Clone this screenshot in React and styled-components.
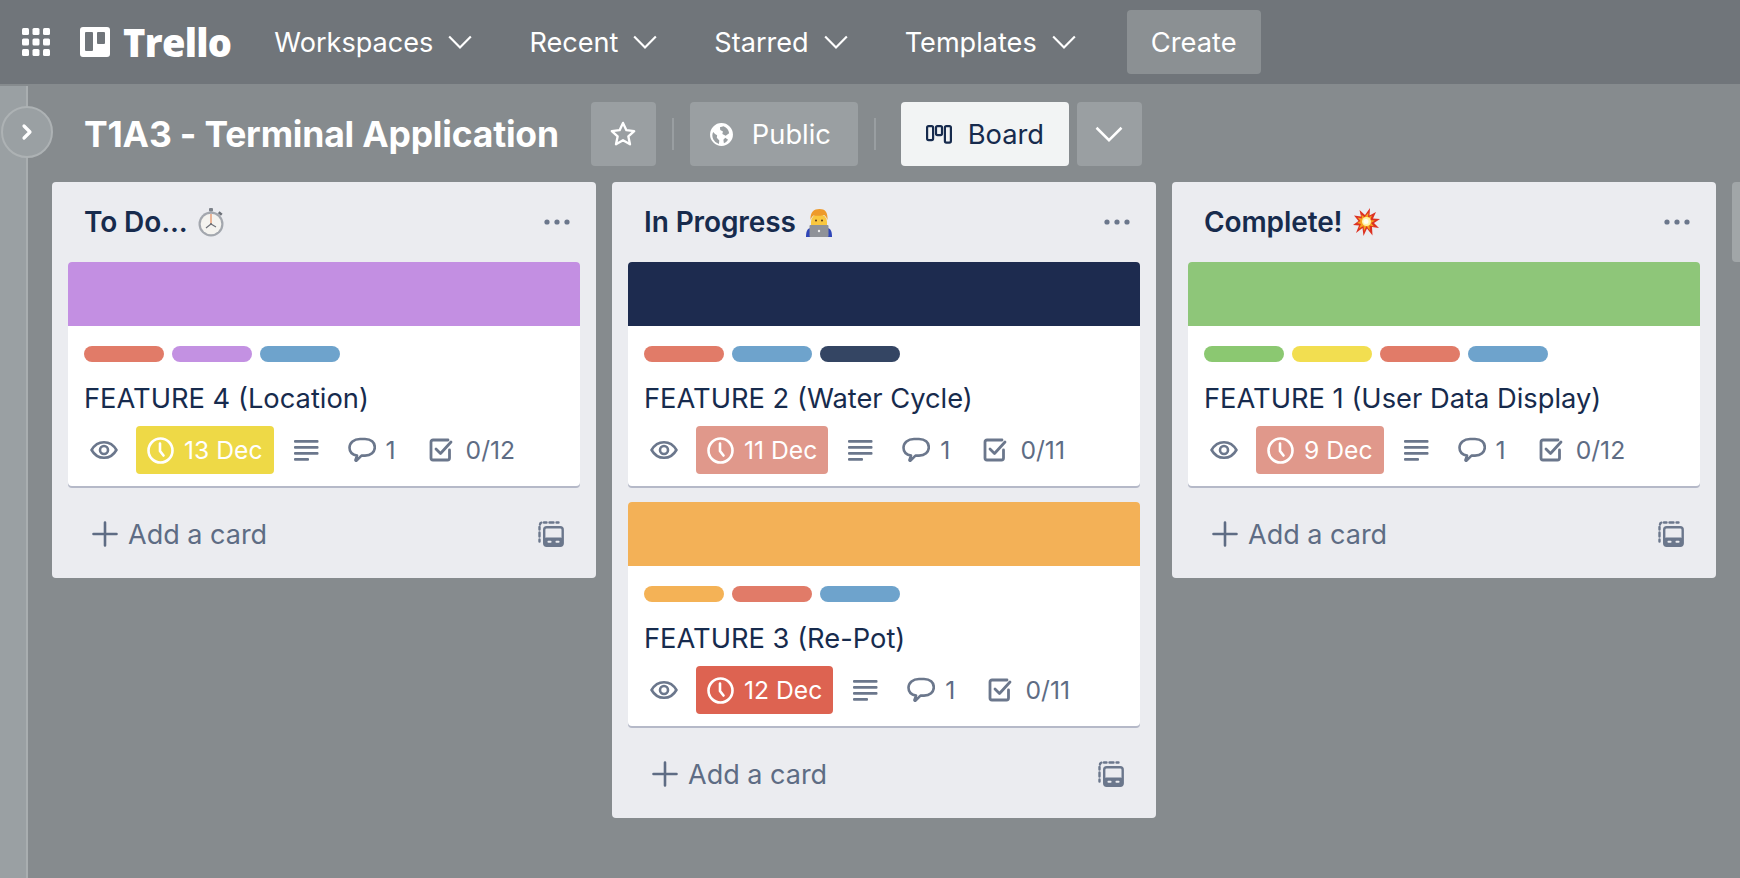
import styled, { createGlobalStyle } from "styled-components";

const Global = createGlobalStyle`
  html, body { margin: 0; padding: 0; height: 100%; }
  body { font-family: Inter, "Liberation Sans", sans-serif; overflow: hidden; background: #868b8e; }
  * { box-sizing: border-box; }
`;

const Page = styled.div`
  width: 1740px;
  height: 878px;
  display: flex;
  flex-direction: column;
  overflow: hidden;
`;

const TopBar = styled.header`
  height: 84px;
  flex: none;
  background: #70757a;
  display: flex;
  align-items: center;
  padding-left: 22px;
  color: #fff;
`;
const Logo = styled.div`
  display: flex;
  align-items: center;
  gap: 13px;
  margin-left: 30px;
  margin-right: 43px;
`;
const LogoText = styled.span`
  font-family: "Open Sans", sans-serif;
  font-size: 38px;
  font-weight: 800;
  letter-spacing: -0.7px;
  line-height: 1;
`;
const NavItem = styled.div`
  display: flex;
  align-items: center;
  gap: 14px;
  font-size: 27.1px;
  margin-right: ${(p) => (p.$last ? 50 : 56)}px;
`;
const CreateButton = styled.div`
  width: 134px;
  height: 64px;
  border-radius: 4px;
  background: #8b9093;
  display: flex;
  align-items: center;
  justify-content: center;
  font-size: 27.3px;
`;

const Body = styled.div`
  flex: 1;
  display: flex;
  position: relative;
`;
const Sidebar = styled.div`
  width: 28px;
  margin-top: 2px;
  flex: none;
  background: #9aa0a3;
  border-right: 2px solid #a9aeb0;
`;
const SidebarToggle = styled.div`
  position: absolute;
  left: 1px;
  top: 22px;
  width: 52px;
  height: 52px;
  border-radius: 50%;
  background: #9aa0a3;
  border: 2px solid #adb2b4;
  display: flex;
  align-items: center;
  justify-content: center;
`;
const Main = styled.main`
  flex: 1;
  min-width: 0;
  padding-top: 18px;
`;
const BoardBar = styled.div`
  height: 64px;
  display: flex;
  align-items: center;
  padding-left: 56px;
  color: #fff;
`;
const BoardTitle = styled.h1`
  margin: 0 32px 0 0;
  padding-top: 2px;
  font-size: 35.5px;
  font-weight: 700;
  line-height: 1;
  letter-spacing: -0.2px;
`;
const BarButton = styled.div`
  height: 64px;
  width: ${(p) => p.$width}px;
  margin-left: ${(p) => p.$offset || 0}px;
  border-radius: 4px;
  background: ${(p) => (p.$light ? "#f2f4f4" : "#9a9fa2")};
  color: ${(p) => (p.$light ? "#172b4d" : "#fff")};
  display: flex;
  align-items: center;
  justify-content: center;
  gap: 16px;
  font-size: 27.3px;
  flex: none;
`;
const PublicButton = styled(BarButton)`
  justify-content: flex-start;
  padding-left: 19px;
  gap: 18px;
`;
const BarDivider = styled.div`
  width: 2px;
  height: 32px;
  margin: 0 ${(p) => p.$after || 16}px 0 16px;
  background: #999ea1;
  flex: none;
`;

const Lists = styled.div`
  display: flex;
  align-items: flex-start;
  gap: 16px;
  margin: 16px 0 0 24px;
`;
const List = styled.section`
  width: 544px;
  flex: none;
  background: #ebecf0;
  border-radius: 4px;
  padding: 0 16px;
`;
const NextList = styled.div`
  width: 40px;
  height: 80px;
  flex: none;
  background: #a1a6a8;
  border-radius: 4px;
`;
const ListHeader = styled.div`
  height: 80px;
  display: flex;
  align-items: center;
  justify-content: space-between;
  padding: 0 10px 0 16px;
`;
const ListTitle = styled.h2`
  margin: 0;
  display: flex;
  align-items: center;
  gap: 10px;
  font-size: 28px;
  font-weight: 600;
  color: #172b4d;
  letter-spacing: -0.1px;
`;
const Cards = styled.div`
  display: flex;
  flex-direction: column;
  gap: 16px;
`;
const Card = styled.article`
  background: #fff;
  border-radius: 4px;
  box-shadow: 0 2px 0 #b5b9c8;
  overflow: hidden;
`;
const Cover = styled.div`
  height: 64px;
  background: ${(p) => p.$color};
`;
const CardBody = styled.div`
  padding: 20px 16px 12px;
`;
const Labels = styled.div`
  display: flex;
  gap: 8px;
`;
const Label = styled.span`
  width: 80px;
  height: 16px;
  border-radius: 8px;
  background: ${(p) => p.$color};
`;
const CardTitle = styled.div`
  margin-top: 21px;
  height: 32px;
  font-size: 27.3px;
  line-height: 32px;
  color: #172b4d;
  white-space: nowrap;
`;
const Meta = styled.div`
  margin-top: 11px;
  height: 48px;
  display: flex;
  align-items: center;
  padding-left: 6px;
  font-size: 24.7px;
  color: #5e6c84;
`;
const DueBadge = styled.div`
  height: 48px;
  margin: 0 20px 0 18px;
  padding: 0 11px;
  display: flex;
  align-items: center;
  gap: 10px;
  border-radius: 4px;
  background: ${(p) => p.$color};
  color: #fff;
`;
const Stat = styled.div`
  display: flex;
  align-items: center;
  gap: ${(p) => p.$inner}px;
  margin-left: ${(p) => p.$gap}px;
`;
const AddRow = styled.div`
  height: 92px;
  display: flex;
  align-items: center;
  justify-content: space-between;
  padding: 4px 16px 0 24px;
  color: #5e6c84;
  font-size: 27px;
`;
const AddLabel = styled.div`
  display: flex;
  align-items: center;
  gap: 10px;
`;

const Chevron = ({ size = 26, width = 2 }) => (
  <svg width={size} height={size} viewBox="0 0 24 24" fill="none" stroke="currentColor" strokeWidth={width}>
    <path d="M2 7l10 10L22 7" />
  </svg>
);

const GridIcon = () => (
  <svg width="28" height="28" viewBox="0 0 28 28" fill="#fff">
    {[0, 10.5, 21].map((y) =>
      [0, 10.5, 21].map((x) => <rect key={`${x}${y}`} x={x} y={y} width="7" height="7" rx="1.5" />)
    )}
  </svg>
);

const TrelloMark = () => (
  <svg width="30" height="30" viewBox="0 0 30 30">
    <path
      fill="#fff"
      fillRule="evenodd"
      d="M3 0h24a3 3 0 0 1 3 3v24a3 3 0 0 1-3 3H3a3 3 0 0 1-3-3V3a3 3 0 0 1 3-3zM6 5a1 1 0 0 0-1 1v17a1 1 0 0 0 1 1h6a1 1 0 0 0 1-1V6a1 1 0 0 0-1-1zM18 5a1 1 0 0 0-1 1v10a1 1 0 0 0 1 1h6a1 1 0 0 0 1-1V6a1 1 0 0 0-1-1z"
    />
  </svg>
);

const StarIcon = () => (
  <svg width="28" height="28" viewBox="0 0 24 24" fill="none" stroke="#fff" strokeWidth="2" strokeLinejoin="round">
    <path d="M12 2.500l2.900 6.200 6.700.8-5 4.600 1.400 6.700-6-3.400-6 3.400 1.400-6.700-5-4.600 6.700-.8z" />
  </svg>
);

const GlobeIcon = () => (
  <svg width="25" height="25" viewBox="0 0 24 24">
    <path
      fill="#fff"
      fillRule="evenodd"
      d="M12 1a11 11 0 1 1 0 22 11 11 0 0 1 0-22zM4 9.500a8.400 8.400 0 0 0 5.500 11.600l.4-3.300-2.400-2.600.3-2.400-2-1.300zM14 4l-3.500 1 .3 2.700 2.600 1.300-.6 2.500 3.200 1.600 3.300-2.200A8.400 8.400 0 0 0 14 4zm1.600 11.200l-1.800 1.800.5 3.500a8.400 8.400 0 0 0 4-3.400z"
    />
  </svg>
);

const BoardIcon = () => (
  <svg width="26" height="19" viewBox="0 0 26 19" fill="none" stroke="#172b4d" strokeWidth="2.200">
    <rect x="1.100" y="1.100" width="6" height="14" rx="1.500" />
    <rect x="10" y="1.100" width="6" height="9" rx="1.500" />
    <rect x="18.900" y="1.100" width="6" height="16.500" rx="1.500" />
  </svg>
);

const DotsIcon = () => (
  <svg width="26" height="6" viewBox="0 0 26 6" fill="#6b778c">
    <circle cx="3" cy="3" r="2.600" />
    <circle cx="13" cy="3" r="2.600" />
    <circle cx="23" cy="3" r="2.600" />
  </svg>
);

const EyeIcon = () => (
  <svg width="28" height="28" viewBox="0 0 28 28" fill="none" stroke="#6b778c" strokeWidth="2.600">
    <path d="M1.600 14C4.500 8.800 9 6.200 14 6.200S23.500 8.800 26.400 14C23.500 19.200 19 21.800 14 21.800S4.500 19.200 1.600 14z" />
    <circle cx="14" cy="14" r="4" />
  </svg>
);

const ClockIcon = () => (
  <svg width="27" height="27" viewBox="0 0 27 27" fill="none" stroke="#fff" strokeWidth="2.600" strokeLinecap="round">
    <circle cx="13.500" cy="13.500" r="12" />
    <path d="M13 6.500v7.500l3.500 4.500" />
  </svg>
);

const LinesIcon = () => (
  <svg width="25" height="22" viewBox="0 0 25 22" fill="#6b778c">
    <rect x="0" y="1" width="24.500" height="2.800" rx="1" />
    <rect x="0" y="7" width="24.500" height="2.800" rx="1" />
    <rect x="0" y="13" width="24.500" height="2.800" rx="1" />
    <rect x="0" y="19" width="15" height="2.800" rx="1" />
  </svg>
);

const CommentIcon = () => (
  <svg width="28" height="26" viewBox="0 0 28 26" fill="none" stroke="#6b778c" strokeWidth="2.600" strokeLinejoin="round">
    <path d="M9 18.600C4.500 17.800 1.500 15 1.500 10.800 1.500 5.500 6 2 12 2h5c6 0 9.800 3.500 9.800 8.300 0 5-4 8.300-9.800 8.300h-3.500L8.500 23.500c-.5.5-1.200.1-1-.6z" />
  </svg>
);

const CheckIcon = () => (
  <svg width="24" height="24" viewBox="0 0 24 24" fill="none" stroke="#6b778c" strokeWidth="2.800" strokeLinejoin="round" strokeLinecap="round">
    <path d="M20.500 12v8a2 2 0 0 1-2 2H4a2 2 0 0 1-2-2V4a2 2 0 0 1 2-2h15" />
    <path d="M7 11l4.500 4.500L22 4" />
  </svg>
);

const PlusIcon = () => (
  <svg width="26" height="26" viewBox="0 0 26 26" fill="none" stroke="#5e6c84" strokeWidth="2.600" strokeLinecap="round">
    <path d="M13 1.500v23M1.500 13h23" />
  </svg>
);

const TemplateIcon = () => (
  <svg width="26" height="26" viewBox="0 0 26 26" fill="none" stroke="#6b778c" strokeWidth="2.400" strokeLinecap="round">
    <path d="M6 1.500h2.500M11.500 1.500h4M18.500 1.500h2" />
    <path d="M1.500 6v2.500M1.500 11.500v4M1.500 18.500v2" />
    <path d="M2 3.500c0-1 .6-1.700 1.400-1.900" />
    <rect x="6.200" y="6.200" width="18.500" height="18.500" rx="2.500" />
    <rect x="6.200" y="16.500" width="18.500" height="8.200" rx="2" fill="#6b778c" stroke="none" />
    <rect x="9.500" y="19.800" width="4" height="2" rx="0.800" fill="#ebecf0" stroke="none" />
    <rect x="17.500" y="19.800" width="4" height="2" rx="0.800" fill="#ebecf0" stroke="none" />
  </svg>
);

const StopwatchEmoji = () => (
  <svg width="26" height="29" viewBox="0 0 26 29">
    <rect x="11" y="0" width="4" height="3.500" rx="1" fill="#7d828a" />
    <rect x="12" y="3" width="2" height="2" fill="#a7abb1" />
    <rect x="20.500" y="4" width="4" height="2.500" fill="#6c7178" transform="rotate(40 22 5)" />
    <circle cx="13" cy="16" r="12.500" fill="#a3a7ae" />
    <circle cx="13" cy="16" r="10.300" fill="#f4f3ef" />
    <path d="M13 16V6" stroke="#e58a5a" strokeWidth="1.200" />
    <path d="M13 16l-5 4M13 16l5 3" stroke="#6d7078" strokeWidth="1.200" />
    <circle cx="13" cy="16" r="1" fill="#6d7078" />
  </svg>
);

const CoderEmoji = () => (
  <svg width="26" height="29" viewBox="0 0 26 29">
    <path d="M0 29c0-5 1-9 5-9h16c4 0 5 4 5 9z" fill="#2f46b8" />
    <path d="M5 14a8 8 0 0 1 16 0v4H5z" fill="#f9c73f" />
    <path d="M4.500 12C4 4 8 1 13.500 1S22 4 21.500 12c-1-2.500-2-4.500-3.500-5C15 8 10 8 7.500 7.500 6 8.500 5.200 10 4.500 12z" fill="#ee9a2a" />
    <circle cx="10" cy="12.500" r="1" fill="#5b3a1a" />
    <circle cx="16" cy="12.500" r="1" fill="#5b3a1a" />
    <rect x="3.500" y="17" width="19" height="12" rx="1" fill="#8f9298" />
    <circle cx="13" cy="23" r="1.200" fill="#ececec" />
  </svg>
);

const BoomEmoji = () => (
  <svg width="27" height="28" viewBox="0 0 27 28">
    <path d="M17 0l-.5 7.500L23 4l-3 6.500 7 .5-6 4 5 5-7-1 .5 8.500-5.500-7-3.500 7.500-1-8L3 25l3-7.500L0 17l5.500-4L1 7.500l7 1L6.500 2l5.500 5z" fill="#dd3222" />
    <path d="M15.500 4.500l-.5 5 4-2-2 4.500 5 .5-4 2.500 3 3.500-4.500-1 .3 5-3.300-4.500-2.500 5-.5-5-4.500 2.500 2-4.500-4-1 3.500-2-3-3.500 4.500 1-.8-4 3.300 2.800z" fill="#f7a21e" />
    <circle cx="13.500" cy="13.500" r="4.500" fill="#fdf3a8" />
    <circle cx="13" cy="13.500" r="2.500" fill="#fffdf0" />
  </svg>
);

const lists = [
  {
    title: "To Do...",
    emoji: <StopwatchEmoji />,
    cards: [
      {
        cover: "#c38fe2",
        labels: ["#e17b68", "#c391e2", "#6ea3cc"],
        title: "FEATURE 4 (Location)",
        due: "13 Dec",
        dueColor: "#eed946",
        checks: "0/12",
      },
    ],
  },
  {
    title: "In Progress",
    emoji: <CoderEmoji />,
    cards: [
      {
        cover: "#1d2b4f",
        labels: ["#e17b68", "#6ea3cc", "#344563"],
        title: "FEATURE 2 (Water Cycle)",
        due: "11 Dec",
        dueColor: "#e0988b",
        checks: "0/11",
      },
      {
        cover: "#f3b157",
        labels: ["#f4b256", "#e17b68", "#6ea3cc"],
        title: "FEATURE 3 (Re-Pot)",
        due: "12 Dec",
        dueColor: "#dd6351",
        checks: "0/11",
      },
    ],
  },
  {
    title: "Complete!",
    emoji: <BoomEmoji />,
    cards: [
      {
        cover: "#8ec679",
        labels: ["#8bc871", "#f2de50", "#e17b68", "#6ea3cc"],
        title: "FEATURE 1 (User Data Display)",
        due: "9 Dec",
        dueColor: "#e0988b",
        checks: "0/12",
      },
    ],
  },
];

const nav = ["Workspaces", "Recent", "Starred", "Templates"];

export default function App() {
  return (
    <Page>
      <Global />
      <TopBar>
        <GridIcon />
        <Logo>
          <TrelloMark />
          <LogoText>Trello</LogoText>
        </Logo>
        {nav.map((item, i) => (
          <NavItem key={item} $last={i === nav.length - 1}>
            {item}
            <Chevron />
          </NavItem>
        ))}
        <CreateButton>Create</CreateButton>
      </TopBar>
      <Body>
        <Sidebar />
        <SidebarToggle>
          <svg width="16" height="18" viewBox="0 0 16 18" fill="none" stroke="#fff" strokeWidth="3.200" strokeLinecap="round" strokeLinejoin="round">
            <path d="M5 3l6 6-6 6" />
          </svg>
        </SidebarToggle>
        <Main>
          <BoardBar>
            <BoardTitle>T1A3 - Terminal Application</BoardTitle>
            <BarButton $width={65}>
              <StarIcon />
            </BarButton>
            <BarDivider />
            <PublicButton $width={168}>
              <GlobeIcon />
              Public
            </PublicButton>
            <BarDivider $after={25} />
            <BarButton $width={168} $light>
              <BoardIcon />
              Board
            </BarButton>
            <BarButton $width={65} $offset={8}>
              <Chevron size={30} />
            </BarButton>
          </BoardBar>
          <Lists>
            {lists.map((list) => (
              <List key={list.title}>
                <ListHeader>
                  <ListTitle>
                    {list.title}
                    {list.emoji}
                  </ListTitle>
                  <DotsIcon />
                </ListHeader>
                <Cards>
                  {list.cards.map((card) => (
                    <Card key={card.title}>
                      <Cover $color={card.cover} />
                      <CardBody>
                        <Labels>
                          {card.labels.map((color, i) => (
                            <Label key={i} $color={color} />
                          ))}
                        </Labels>
                        <CardTitle>{card.title}</CardTitle>
                        <Meta>
                          <EyeIcon />
                          <DueBadge $color={card.dueColor}>
                            <ClockIcon />
                            {card.due}
                          </DueBadge>
                          <LinesIcon />
                          <Stat $gap={29} $inner={10}>
                            <CommentIcon />1
                          </Stat>
                          <Stat $gap={33} $inner={13}>
                            <CheckIcon />
                            {card.checks}
                          </Stat>
                        </Meta>
                      </CardBody>
                    </Card>
                  ))}
                </Cards>
                <AddRow>
                  <AddLabel>
                    <PlusIcon />
                    Add a card
                  </AddLabel>
                  <TemplateIcon />
                </AddRow>
              </List>
            ))}
            <NextList />
          </Lists>
        </Main>
      </Body>
    </Page>
  );
}
